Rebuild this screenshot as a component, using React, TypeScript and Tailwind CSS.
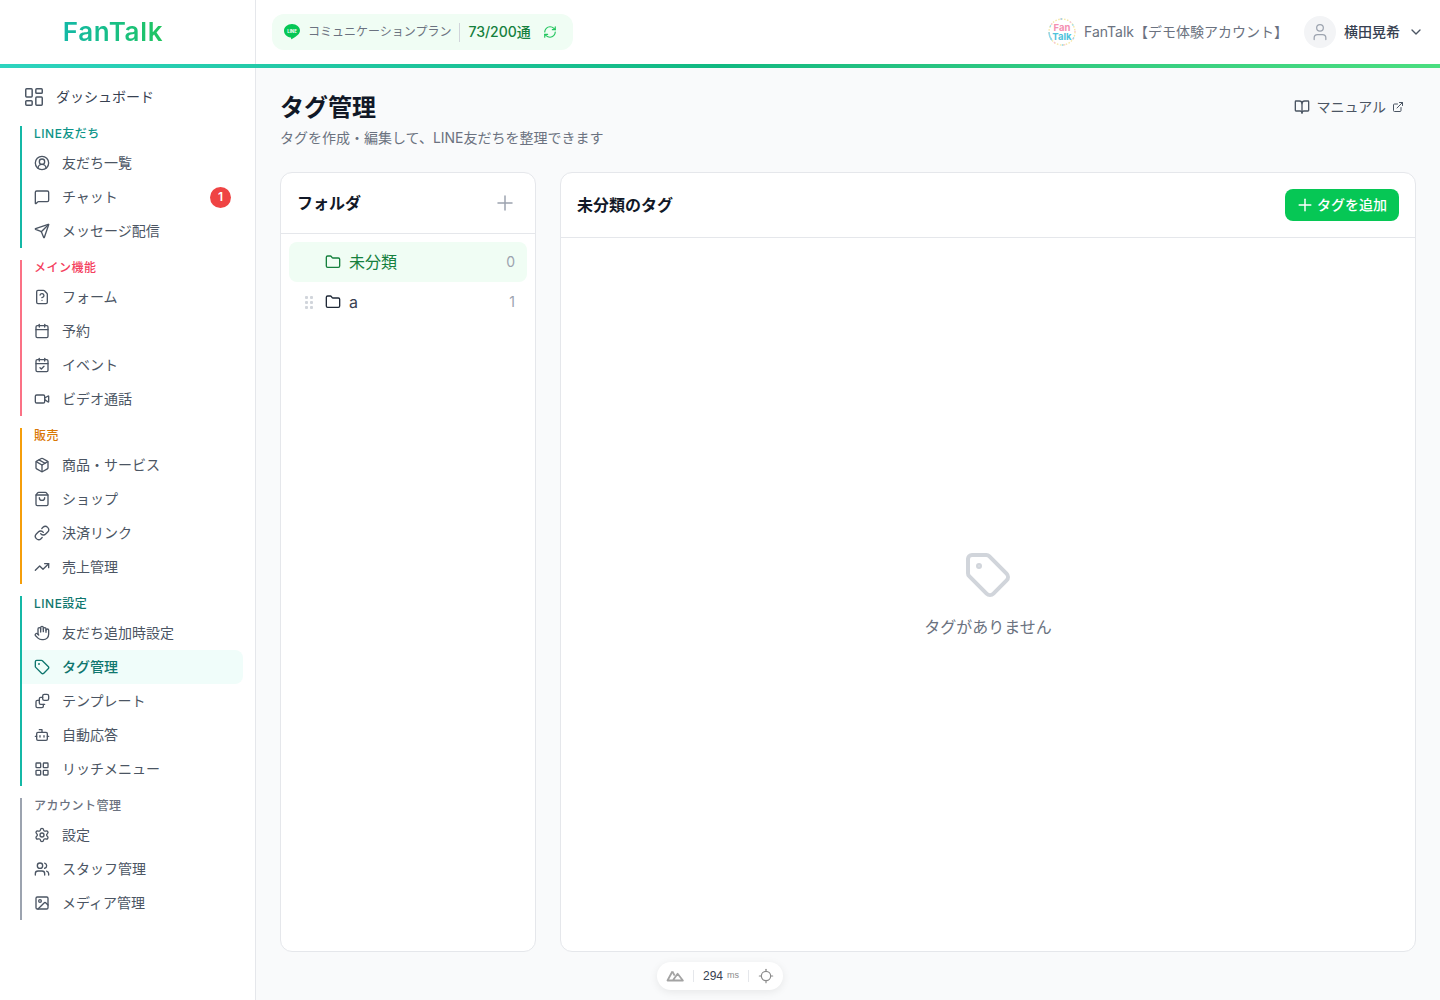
import {
  Bot, BookOpen, Calendar, CalendarCheck, ChevronDown, CircleUserRound, ExternalLink, FileQuestion, Folder,
  Hand, Image, LayoutDashboard, LayoutGrid, Link, Locate, MessageSquare, Package, Plus, RefreshCw, Send,
  Settings, ShoppingBag, Tag, TrendingUp, User, Users, Video,
} from "lucide-react";

function TemplateIcon({ className }: { className?: string }) {
  return (
    <svg viewBox="0 0 24 24" fill="none" stroke="currentColor" strokeWidth={2} strokeLinecap="round" strokeLinejoin="round" className={className}>
      <rect x="13" y="2" width="9" height="9" rx="2.5" />
      <path d="M13 6.500h-3a2 2 0 0 0-2 2V15a2 2 0 0 0 2 2h6" />
      <path d="M8 11H5a2 2 0 0 0-2 2v7a2 2 0 0 0 2 2h7a2 2 0 0 0 2-2v-3" />
    </svg>
  );
}

const groups = [
  {
    title: "LINE友だち",
    bar: "border-[#14b8a6]",
    titleColor: "text-[#0d9488] font-medium",
    items: [
      { label: "友だち一覧", icon: CircleUserRound },
      { label: "チャット", icon: MessageSquare, badge: 1 },
      { label: "メッセージ配信", icon: Send },
    ],
  },
  {
    title: "メイン機能",
    bar: "border-[#fb7185]",
    titleColor: "text-[#f43f5e] font-medium",
    items: [
      { label: "フォーム", icon: FileQuestion },
      { label: "予約", icon: Calendar },
      { label: "イベント", icon: CalendarCheck },
      { label: "ビデオ通話", icon: Video },
    ],
  },
  {
    title: "販売",
    bar: "border-[#f59e0b]",
    titleColor: "text-[#d97706] font-medium",
    items: [
      { label: "商品・サービス", icon: Package },
      { label: "ショップ", icon: ShoppingBag },
      { label: "決済リンク", icon: Link },
      { label: "売上管理", icon: TrendingUp },
    ],
  },
  {
    title: "LINE設定",
    bar: "border-[#14b8a6]",
    titleColor: "text-[#0f766e] font-medium",
    items: [
      { label: "友だち追加時設定", icon: Hand },
      { label: "タグ管理", icon: Tag, active: true },
      { label: "テンプレート", icon: TemplateIcon },
      { label: "自動応答", icon: Bot },
      { label: "リッチメニュー", icon: LayoutGrid },
    ],
  },
  {
    title: "アカウント管理",
    bar: "border-[#9ca3af]",
    titleColor: "text-[#6b7280] font-medium",
    items: [
      { label: "設定", icon: Settings },
      { label: "スタッフ管理", icon: Users },
      { label: "メディア管理", icon: Image },
    ],
  },
];

function LineIcon() {
  return (
    <svg viewBox="1 1 14 14" className="w-4 h-4 shrink-0">
      <path d="M8 1C4.100 1 1 3.600 1 6.900c0 3 2.500 5.400 5.800 5.900.5.100.5.400.4 1-.1.500.2.700.7.400 1.800-1 4.800-3 6-4.500.7-.9 1.100-1.900 1.100-2.800C15 3.600 11.900 1 8 1z" fill="#06c755" />
      <text x="8" y="8.500" textAnchor="middle" fontSize="3.800" fontWeight="700" fill="#fff" fontFamily="Inter, sans-serif">LINE</text>
    </svg>
  );
}

function AccountLogo() {
  return (
    <div className="relative w-7 h-7 shrink-0">
      <svg viewBox="0 0 28 28" className="absolute inset-0 w-7 h-7" fill="none">
        <circle cx="14" cy="14" r="13" stroke="#f6e7a8" strokeWidth="1.400" strokeDasharray="1.500 1.500" />
        <circle cx="14" cy="14" r="13" stroke="#f7c6d6" strokeWidth="1.400" strokeDasharray="1.500 9" strokeDashoffset="4" />
        <circle cx="14" cy="14" r="13" stroke="#8fd8ea" strokeWidth="1.400" strokeDasharray="9 72.700" strokeDashoffset="50" />
        <circle cx="14" cy="14" r="13" stroke="#8fd8ea" strokeWidth="1.400" strokeDasharray="1.500 12" strokeDashoffset="8" />
      </svg>
      <div className="absolute inset-0 flex flex-col items-center justify-center text-[9.5px] leading-[9px] font-bold">
        <span className="text-[#f48fb1]">Fan</span>
        <span className="text-[#4fc3dc]">Talk</span>
      </div>
    </div>
  );
}

function Grip() {
  return (
    <div className="grid grid-cols-2 gap-x-[2px] gap-y-[2px] w-2 shrink-0">
      {[0, 1, 2, 3, 4, 5].map((i) => (
        <span key={i} className="w-[3px] h-[3px] bg-[#d1d5db] rounded-[1px]" />
      ))}
    </div>
  );
}

export default function App() {
  return (
    <div className="relative h-screen flex flex-col overflow-hidden bg-[#f9fafb] text-[#111827] font-['Inter','Noto_Sans_CJK_JP',sans-serif]">
      {/* Header */}
      <header className="h-16 shrink-0 flex bg-white">
        <div className="w-[256px] shrink-0 border-r border-[#e5e7eb] flex items-center justify-center pr-[29px]">
          <span className="text-[26px] leading-8 font-semibold tracking-[0.7px] bg-gradient-to-r from-[#14b8a6] to-[#22c55e] bg-clip-text text-transparent">
            FanTalk
          </span>
        </div>
        <div className="flex-1 flex items-center justify-between pl-4 pr-4">
          <div className="flex items-center h-9 w-[301px] px-3 rounded-xl bg-[#f0fdf4]">
            <LineIcon />
            <span className="ml-2 text-xs text-[#6b7280]">コミュニケーションプラン</span>
            <span className="ml-2 w-px h-[19px] bg-[#d1d5db]" />
            <span className="ml-2 text-sm font-medium text-[#15803d]">73/200通</span>
            <RefreshCw className="ml-3 w-3.5 h-3.5 text-[#22c55e]" />
          </div>
          <div className="flex items-center">
            <AccountLogo />
            <span className="ml-2 text-sm text-[#6b7280]">FanTalk【デモ体験アカウント】</span>
            <span className="ml-4 w-8 h-8 rounded-full bg-[#f3f4f6] flex items-center justify-center">
              <User className="w-5 h-5 text-[#9ca3af]" strokeWidth={1.5} />
            </span>
            <span className="ml-2 text-sm font-medium text-[#374151]">横田晃希</span>
            <ChevronDown className="ml-2 w-4 h-4 text-[#4b5563]" />
          </div>
        </div>
      </header>
      <div className="h-1 shrink-0 bg-gradient-to-r from-[#2dd4bf] via-[#10b981] to-[#4ade80]" />

      <div className="flex-1 flex min-h-0">
        {/* Sidebar */}
        <aside className="w-[256px] shrink-0 bg-white border-r border-[#e5e7eb] pt-3 pl-5 pr-3">
          <div className="h-[34px] flex items-center pl-[3px] text-sm text-[#374151]">
            <LayoutDashboard className="w-[22px] h-[22px] text-[#4b5563] mr-[11px]" strokeWidth={1.6} />
            ダッシュボード
          </div>
          <div className="mt-3 flex flex-col gap-3">
            {groups.map((g) => (
              <div key={g.title} className={`border-l-2 ${g.bar}`}>
                <div className={`h-5 pl-3 pb-1 flex items-center text-xs tracking-[0.5px] ${g.titleColor}`}>{g.title}</div>
                {g.items.map((item) => {
                  const Icon = item.icon;
                  return (
                    <div
                      key={item.label}
                      className={`h-[34px] pl-3 pr-3 flex items-center text-sm rounded-r-lg ${
                        item.active ? "bg-[#f0fdfa] text-[#0f766e] font-medium" : "text-[#4b5563]"
                      }`}
                    >
                      <Icon className={`w-4 h-4 shrink-0 mr-3 ${item.active ? "text-[#0f766e]" : "text-[#4b5563]"}`} strokeWidth={2} />
                      <span className="flex-1">{item.label}</span>
                      {item.badge ? (
                        <span className="w-[21px] h-[21px] rounded-full bg-[#ef4444] text-white text-xs font-semibold flex items-center justify-center">
                          {item.badge}
                        </span>
                      ) : null}
                    </div>
                  );
                })}
              </div>
            ))}
          </div>
        </aside>

        {/* Main */}
        <main className="flex-1 min-w-0 flex flex-col px-6 pt-6 pb-12">
          <div className="flex items-start justify-between mb-6">
            <div>
              <h1 className="text-2xl font-bold text-[#111827]">タグ管理</h1>
              <p className="mt-1 text-sm text-[#6b7280]">タグを作成・編集して、LINE友だちを整理できます</p>
            </div>
            <div className="flex items-center h-[30px] px-3 text-sm text-[#4b5563]">
              <BookOpen className="w-4 h-4 mr-[7px] translate-x-px" strokeWidth={2} />
              マニュアル
              <ExternalLink className="w-3 h-3 ml-[6px]" />
            </div>
          </div>

          <div className="flex-1 min-h-0 flex gap-6">
            {/* Folders */}
            <section className="w-[256px] shrink-0 bg-white border border-[#e5e7eb] rounded-xl">
              <div className="h-[61px] border-b border-[#e5e7eb] flex items-center justify-between px-4">
                <h2 className="text-base font-semibold text-[#111827]">フォルダ</h2>
                <Plus className="w-6 h-6 mr-[2px] text-[#9ca3af]" strokeWidth={1.5} />
              </div>
              <div className="p-2">
                <div className="h-10 rounded-lg bg-[#f0fdf4] flex items-center pl-9 pr-3 text-[#15803d]">
                  <Folder className="w-4 h-4 mr-2" strokeWidth={2} />
                  <span className="flex-1 text-base">未分類</span>
                  <span className="text-sm text-[#9ca3af]">0</span>
                </div>
                <div className="h-10 flex items-center pl-4 pr-3 text-[#374151]">
                  <Grip />
                  <Folder className="ml-3 w-4 h-4 mr-2 text-[#1f2937]" strokeWidth={2} />
                  <span className="flex-1 text-base">a</span>
                  <span className="text-sm text-[#9ca3af]">1</span>
                </div>
              </div>
            </section>

            {/* Tags */}
            <section className="flex-1 min-w-0 bg-white border border-[#e5e7eb] rounded-xl flex flex-col">
              <div className="h-[65px] shrink-0 border-b border-[#e5e7eb] flex items-center justify-between px-4">
                <h2 className="text-base font-semibold text-[#111827]">未分類のタグ</h2>
                <button className="h-8 w-[114px] pl-[10px] rounded-lg bg-[#06c755] text-white text-sm font-medium flex items-center">
                  <Plus className="w-5 h-5 mr-[2px]" strokeWidth={1.75} />
                  タグを追加
                </button>
              </div>
              <div className="flex-1 flex flex-col items-center justify-center">
                <Tag className="w-12 h-12 text-[#d1d5db]" />
                <p className="mt-4 text-base text-[#6b7280]">タグがありません</p>
              </div>
            </section>
          </div>
        </main>
      </div>

      {/* Dev pill */}
      <div className="absolute left-[657px] top-[962px] w-[126px] h-7 rounded-full bg-white shadow-[0_2px_8px_rgba(0,0,0,0.08)] flex items-center justify-center text-[#6b7280]">
        <svg viewBox="0 0 24 16" className="w-[18px] h-3 text-[#a3a3a3]" fill="none" stroke="currentColor" strokeWidth={2.4} strokeLinejoin="round">
          <path d="M8.500 2 2 14h6.500" />
          <path d="M8.500 2l3 5.500" />
          <path d="M15.500 5 9 14h13.500z" />
        </svg>
        <span className="mx-[9px] w-px h-3 bg-[#e5e7eb]" />
        <span className="font-['Liberation_Sans',sans-serif] text-xs text-[#374151]">294</span>
        <span className="ml-1 font-['Liberation_Sans',sans-serif] text-[9px] text-[#8b8b8b]">ms</span>
        <span className="mx-[9px] w-px h-3 bg-[#e5e7eb]" />
        <Locate className="w-4 h-4 text-[#8b8b8b]" strokeWidth={1.75} />
      </div>
    </div>
  );
}
